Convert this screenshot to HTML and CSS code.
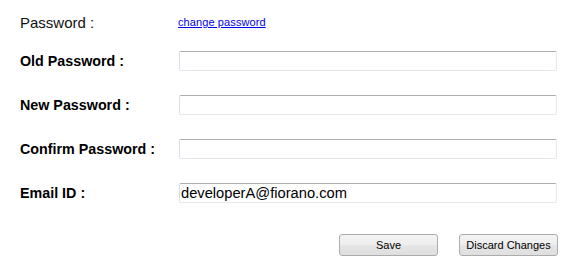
FILE: index.html
```html
<!DOCTYPE html>
<html>
<head>
<meta charset="utf-8">
<link rel="stylesheet" href="styles.css">
</head>
<body>
<div class="form">
  <div class="row head">
    <span class="plain">Password :</span>
    <a class="link" href="#">change password</a>
  </div>
  <div class="row">
    <label class="lbl">Old Password :</label>
    <input class="field" type="password">
  </div>
  <div class="row">
    <label class="lbl">New Password :</label>
    <input class="field" type="password">
  </div>
  <div class="row">
    <label class="lbl">Confirm Password :</label>
    <input class="field" type="password">
  </div>
  <div class="row">
    <label class="lbl">Email ID :</label>
    <input class="field" type="text" value="developerA@fiorano.com">
  </div>
  <div class="actions">
    <button class="btn">Save</button>
    <button class="btn">Discard Changes</button>
  </div>
</div>
</body>
</html>
```
FILE: styles.css
```css
html, body {
  margin: 0;
  padding: 0;
  background: #ffffff;
}
body {
  font-family: "Liberation Sans", Arial, sans-serif;
  color: #000;
}
.form {
  padding: 12px 0 0 20px;
  width: 538px;
}
.row {
  display: grid;
  grid-template-columns: 159px 378px;
  align-items: center;
  height: 20px;
  margin-bottom: 24px;
}
.head {
  margin-bottom: 19px;
}
.plain {
  font-size: 15px;
  color: #111;
}
.link {
  font-size: 11px;
  color: #0000ee;
  text-decoration: underline;
  margin-left: -1px;
  letter-spacing: 0.1px;
}
.lbl {
  font-size: 14.3px;
  font-weight: bold;
}
.field {
  box-sizing: border-box;
  width: 378px;
  height: 20px;
  margin: 0;
  padding: 0 1px;
  border: 1px solid #e3e9ef;
  border-top-color: #abadb3;
  border-left-color: #dbdfe6;
  border-radius: 2px;
  font-family: "Liberation Sans", Arial, sans-serif;
  font-size: 14.7px;
  color: #000;
  outline: none;
  background: #fff;
}
.actions {
  display: flex;
  justify-content: flex-end;
  gap: 21px;
  margin-top: 31px;
}
.btn {
  box-sizing: border-box;
  width: 99px;
  height: 22px;
  margin: 0;
  padding: 0;
  border: 1px solid #acacac;
  border-radius: 3px;
  background: linear-gradient(#f4f4f4 0%, #eeeeee 50%, #e5e5e5 51%, #dfdfdf 100%);
  font-family: "Liberation Sans", Arial, sans-serif;
  font-size: 11px;
  color: #000;
}
```
